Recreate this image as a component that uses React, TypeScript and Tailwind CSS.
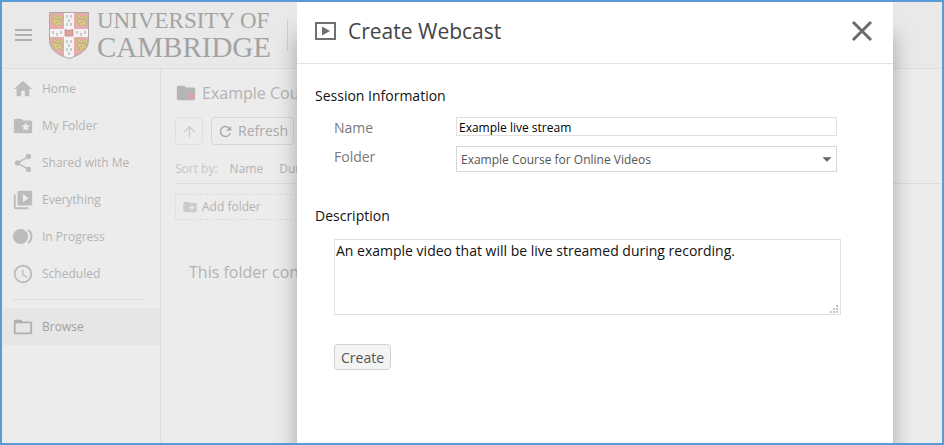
import { useState } from "react";
import type { ReactNode } from "react";
import {
  MdArrowDropDown,
  MdArrowUpward,
  MdCreateNewFolder,
  MdFolder,
  MdFolderOpen,
  MdFolderSpecial,
  MdHome,
  MdRefresh,
  MdSchedule,
  MdShare,
  MdVideoLibrary,
} from "react-icons/md";

const InProgressIcon = () => (
  <svg width="22" height="22" viewBox="0 0 22 22" fill="none">
    <circle cx="8.5" cy="10.5" r="7.6" fill="currentColor" />
    <path
      d="M16 4.2c4.6 2.4 4.6 10.2 0 12.6"
      stroke="currentColor"
      strokeWidth="2"
    />
  </svg>
);

const NAV_ITEMS: { label: string; icon: ReactNode }[] = [
  { label: "Home", icon: <MdHome size={22} /> },
  { label: "My Folder", icon: <MdFolderSpecial size={22} /> },
  { label: "Shared with Me", icon: <MdShare size={22} /> },
  { label: "Everything", icon: <MdVideoLibrary size={22} /> },
  { label: "In Progress", icon: <InProgressIcon /> },
  { label: "Scheduled", icon: <MdSchedule size={22} /> },
];

const LION_PATH =
  "M1.5 2.5l2-1 1.5 2 3 .5 2-2M1 6l2.5-1 1 2 3-.5 2.5 1.5M2.5 11l1.5-3 2 1.5-.5 2M7 11.5l1-3 2.5.5v2.5M11 1.5l1 3-1.5 1";

// one lion of the shield, drawn in a 12x13 box
const Lion = ({ x, y }: { x: number; y: number }) => (
  <g transform={`translate(${x} ${y})`} fill="none">
    <path d={LION_PATH} stroke="#b3a578" strokeWidth="2.2" />
    <path d={LION_PATH} stroke="#d9d284" strokeWidth="1.3" />
  </g>
);

const SHIELD_PATH =
  "M.5.5h39v28c0 9-8 14.5-19.5 18C8.5 43 .5 37.5.5 28.5z";

const Shield = () => (
  <svg width="40" height="47" viewBox="0 0 40 47" aria-hidden="true">
    <clipPath id="shield">
      <path d={SHIELD_PATH} />
    </clipPath>
    <g clipPath="url(#shield)">
      <rect width="40" height="47" fill="#e6abad" />
      <path d="M15 0h10v47H15zM0 17h40v8H0z" fill="#f3f3f3" />
      <path
        d="M18 3v3M22 3v3M20 7v3M18 11v3M22 11v3M18 28v3M22 28v3M20 32v3M18 36v3M22 36v3M20 40v3M4 19v3M8 21v3M12 19v3M28 19v3M32 21v3M36 19v3"
        stroke="#b0b0b0"
        strokeWidth="1.2"
      />
      <path
        d="M16 17.5l4 1 4-1V24h-8z"
        fill="#dfa095"
        stroke="#b89090"
        strokeWidth=".8"
      />
      <Lion x={1.5} y={2} />
      <Lion x={26} y={2} />
      <Lion x={2} y={26} />
      <Lion x={26} y={26} />
    </g>
    <path d={SHIELD_PATH} fill="none" stroke="#b0a8a8" />
  </svg>
);

const App = () => {
  const [name, setName] = useState("Example live stream");
  const [folder, setFolder] = useState("Example Course for Online Videos");
  const [description, setDescription] = useState(
    "An example video that will be live streamed during recording.",
  );
  const [open, setOpen] = useState(true);

  return (
    <div className="relative flex min-h-screen flex-col overflow-hidden border-2 border-[#5b9bd5] bg-[#ececec] font-['Open_Sans',sans-serif] text-[#b3b3b3]">
      {/* HEADER */}
      <header className="flex h-[67px] items-center border-b border-[#dedede] bg-[#e9e9e9] pl-[13px]">
        <button aria-label="Menu" className="flex w-[17px] flex-col gap-[3px]">
          <span className="h-[2px] bg-[#b0b0b0]" />
          <span className="h-[2px] bg-[#b0b0b0]" />
          <span className="h-[2px] bg-[#b0b0b0]" />
        </button>
        <a href="#" className="ml-[17px] flex items-center gap-2">
          <Shield />
          <span className="flex flex-col font-['Liberation_Serif',serif] text-[#a3a3a3]">
            <span className="text-[23px] leading-6">UNIVERSITY OF</span>
            <span className="text-[29px] leading-7">CAMBRIDGE</span>
          </span>
        </a>
        <span className="ml-4 h-[30px] w-px bg-[#d0d0d0]" />
      </header>

      <div className="flex flex-1">
        {/* SIDEBAR */}
        <nav className="w-[159px] shrink-0 border-r border-[#e0e0e0] pt-px text-xs">
          {NAV_ITEMS.map((item) => (
            <a
              key={item.label}
              href="#"
              className="flex h-[37px] items-center gap-2 pl-[10px]"
            >
              <span className="text-[#bcbcbc]">{item.icon}</span>
              {item.label}
            </a>
          ))}
          <hr className="mt-[7px] mr-[14px] mb-2 ml-[10px] border-[#dedede]" />
          <a
            href="#"
            className="flex h-[37px] items-center gap-2 bg-[#e6e6e6] pl-[10px] text-[#a0a0a0]"
          >
            <MdFolderOpen size={22} className="text-[#b0b0b0]" />
            Browse
          </a>
        </nav>

        {/* FOLDER CONTENT */}
        <main className="w-0 flex-1 pl-[14px] whitespace-nowrap">
          <h1 className="flex h-12 items-center gap-[5px] text-base">
            <span className="relative">
              <MdFolder size={22} className="text-[#b5b5b5]" />
              <span className="absolute right-1 bottom-[6px] size-1 bg-[#eba294]" />
            </span>
            Example Course
          </h1>
          <div className="flex gap-2">
            <button
              aria-label="Up"
              className="flex size-7 items-center justify-center rounded-sm border border-[#e0e0e0] text-[#cccccc]"
            >
              <MdArrowUpward size={17} />
            </button>
            <button className="flex h-7 items-center gap-1 rounded-sm border border-[#d6d6d6] px-[5px] text-sm text-[#aaaaaa]">
              <MdRefresh size={17} />
              Refresh
            </button>
          </div>
          <div className="mt-[10px] flex h-[29px] items-center gap-3 border-b border-[#dcdcdc] text-xs">
            <span className="text-[#c6c6c6]">Sort by:</span>
            <span>Name</span>
            <span className="ml-1">Duration</span>
          </div>
          <button className="mt-[10px] flex h-[26px] w-1/2 items-center gap-1 border border-dashed border-[#dcdcdc] pl-[6px] text-xs">
            <MdCreateNewFolder size={16} className="text-[#cacaca]" />
            Add folder
          </button>
          <p className="mt-10 pl-[14px] text-base">This folder contains</p>
        </main>
      </div>

      {/* MODAL */}
      {open && (
        <div className="absolute inset-0 flex justify-end pr-[49px]">
          <section
            role="dialog"
            aria-labelledby="dialog-title"
            className="w-[596px] bg-white shadow-[0_32px_20px_rgba(0,0,0,0.3)]"
          >
            <div className="flex h-[62px] items-center border-b border-[#e2e2e2] pr-5 pb-[3px] pl-[18px]">
              <svg width="21" height="18" viewBox="0 0 21 18" fill="none">
                <path d="M1 1h19v16H1z" stroke="#707070" strokeWidth="2" />
                <path d="M7 4.5v9L15 9z" fill="#707070" />
              </svg>
              <h2
                id="dialog-title"
                className="ml-3 text-[21px] leading-7 text-[#444]"
              >
                Create Webcast
              </h2>
              <button
                aria-label="Close"
                onClick={() => setOpen(false)}
                className="ml-auto"
              >
                <svg width="22" height="22" viewBox="0 0 22 22" fill="none">
                  <path
                    d="M2 2l18 18M20 2L2 20"
                    stroke="#6b6b6b"
                    strokeWidth="3"
                  />
                </svg>
              </button>
            </div>

            <form
              onSubmit={(e) => e.preventDefault()}
              className="pt-5 pr-[52px] pl-[18px] text-sm text-[#111]"
            >
              <h3 className="leading-6">Session Information</h3>
              <div className="mt-[9px] flex h-[19px] pr-1 pl-[19px]">
                <label
                  htmlFor="name"
                  className="w-[122px] leading-[22px] text-[#7a7a7a]"
                >
                  Name
                </label>
                <input
                  id="name"
                  value={name}
                  onChange={(e) => setName(e.target.value)}
                  className="min-w-0 flex-1 border border-[#e0e0e0] px-[2px] pt-[2px] text-xs text-black outline-none"
                />
              </div>
              <div className="mt-[10px] flex h-[26px] pr-1 pl-[19px]">
                <label
                  htmlFor="folder"
                  className="w-[122px] leading-[22px] text-[#7a7a7a]"
                >
                  Folder
                </label>
                <div className="relative flex min-w-0 flex-1">
                  <select
                    id="folder"
                    value={folder}
                    onChange={(e) => setFolder(e.target.value)}
                    className="w-full appearance-none border border-[#d6d6d6] bg-white px-1 pt-[2px] text-xs text-[#555] outline-none"
                  >
                    <option>Example Course for Online Videos</option>
                  </select>
                  <MdArrowDropDown
                    size={22}
                    className="pointer-events-none absolute top-[2px] -right-px text-[#666]"
                  />
                </div>
              </div>

              <h3 className="mt-8 leading-6">
                <label htmlFor="description">Description</label>
              </h3>
              <div className="relative mt-[11px] ml-[19px] flex">
                <textarea
                  id="description"
                  value={description}
                  onChange={(e) => setDescription(e.target.value)}
                  className="h-[76px] w-full resize-none border border-[#e0e0e0] px-px py-0 leading-[22px] outline-none"
                />
                <svg
                  width="8"
                  height="8"
                  viewBox="0 0 8 8"
                  fill="#c4c4c4"
                  className="pointer-events-none absolute right-[3px] bottom-[2px]"
                >
                  <path d="M0 6h2v2H0zM3 6h2v2H3zM6 6h2v2H6zM3 3h2v2H3zM6 3h2v2H6zM6 0h2v2H6z" />
                </svg>
              </div>
              <button className="mt-[29px] ml-[19px] h-[26px] rounded-sm border border-[#d0d0d0] bg-[#f4f4f4] px-[6px] pt-px text-[#555]">
                Create
              </button>
            </form>
          </section>
        </div>
      )}
    </div>
  );
};

export default App;
